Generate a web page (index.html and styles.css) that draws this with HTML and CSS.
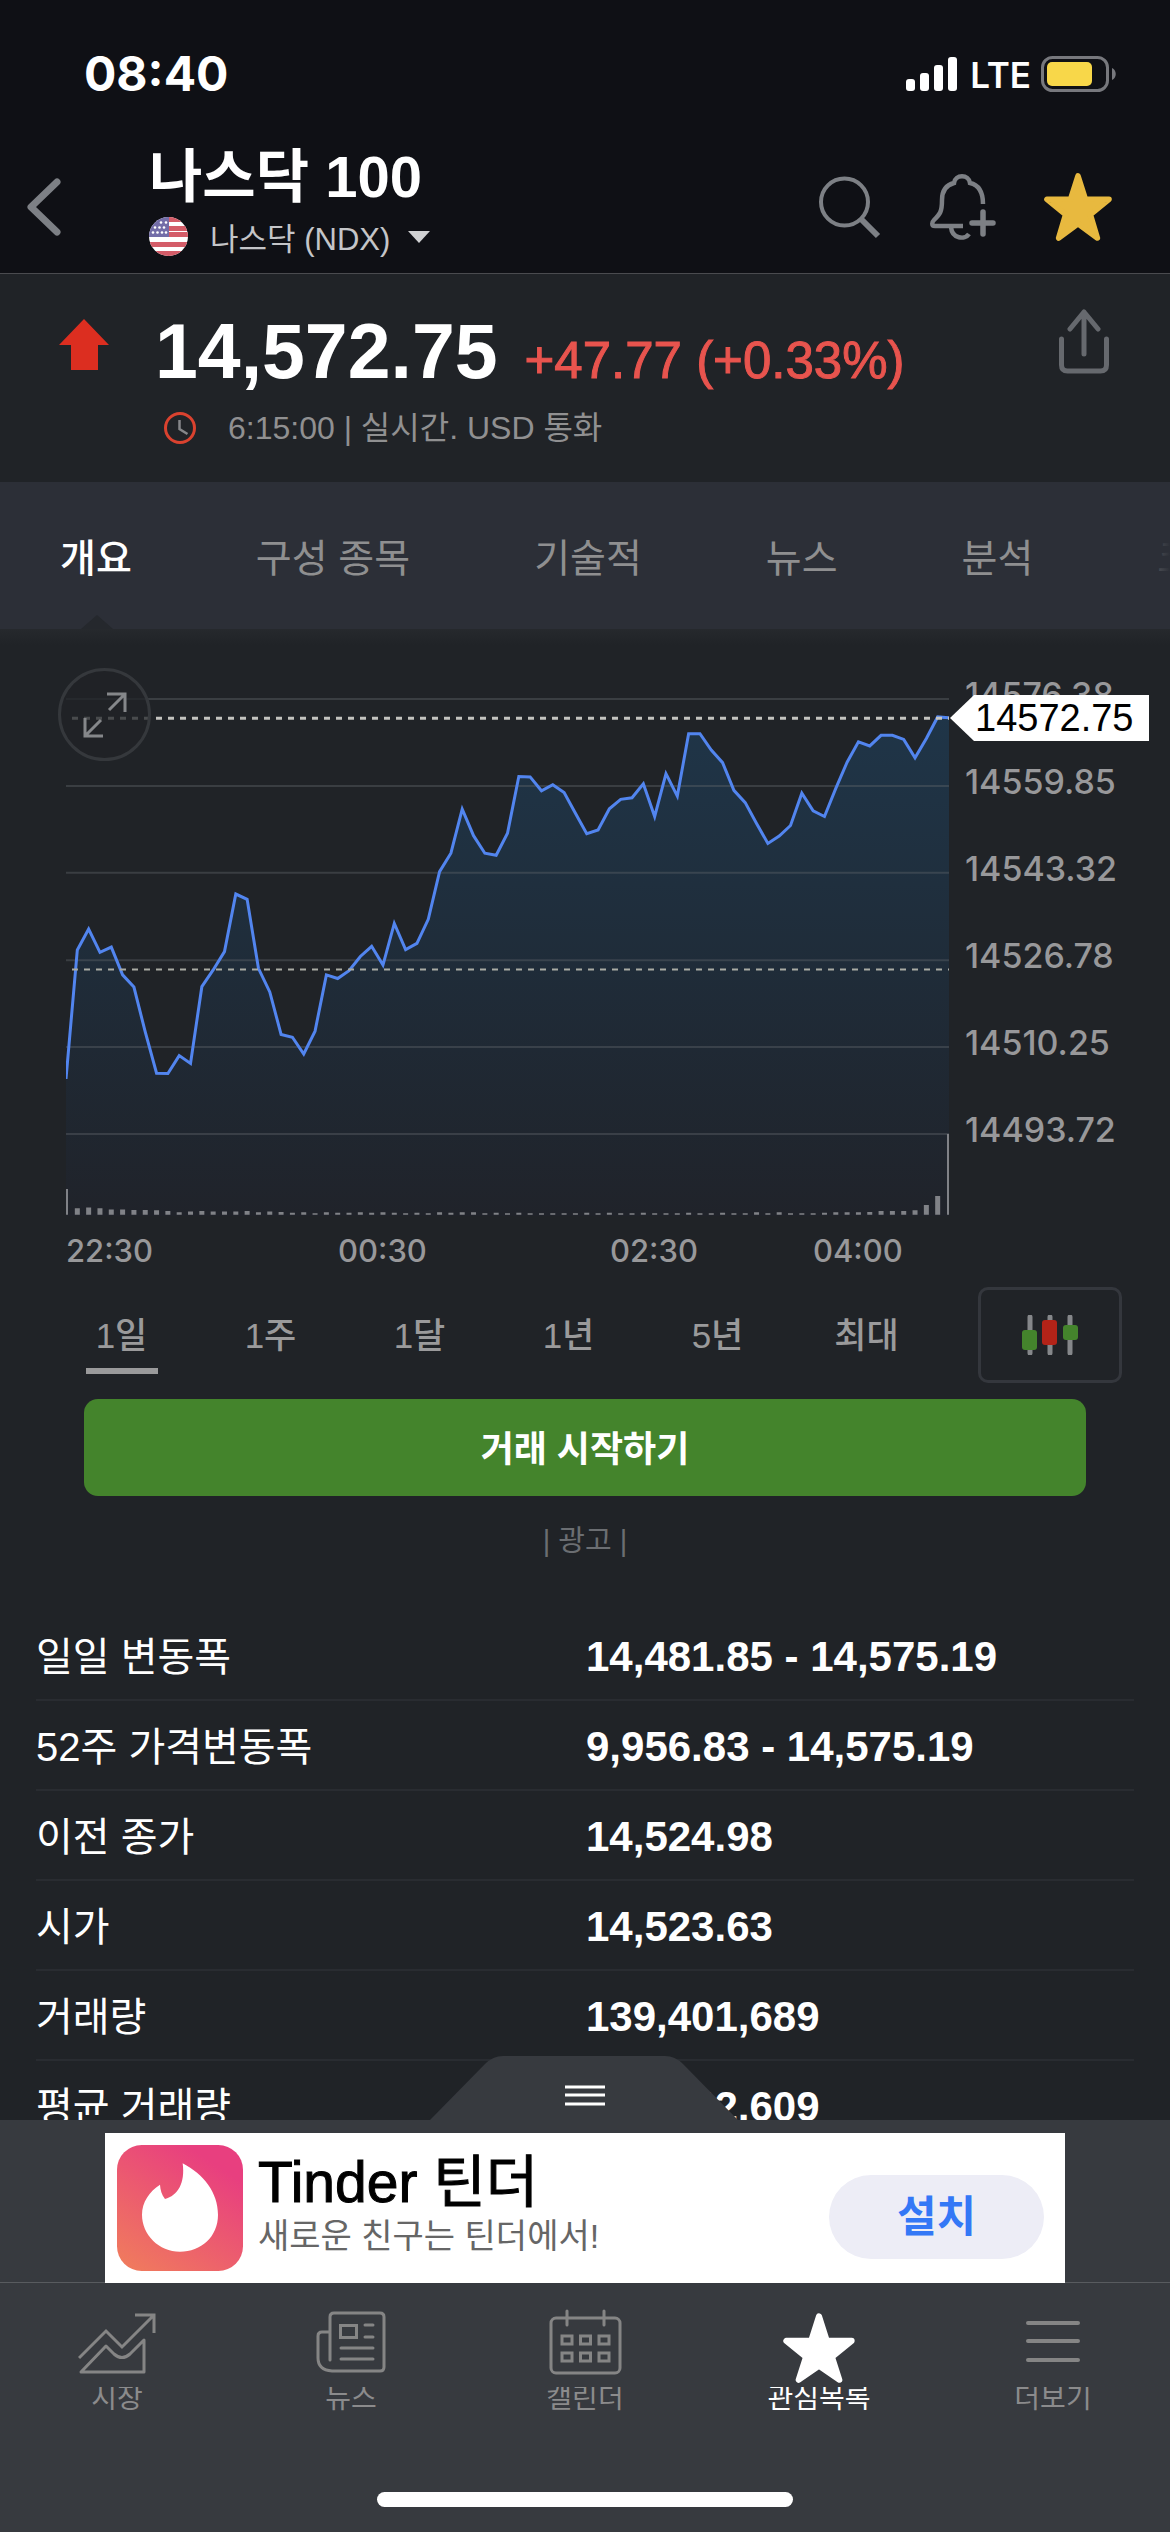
FILE: index.html
```html
<!DOCTYPE html>
<html lang="ko">
<head>
<meta charset="utf-8">
<meta name="viewport" content="width=device-width, initial-scale=1">
<title>나스닥 100</title>
<link rel="stylesheet" href="styles.css">
</head>
<body>
<div class="app">
  <div class="status">
    <span class="status-time">08:40</span>
    <div class="status-right">
      <svg class="signal" width="52" height="34" viewBox="0 0 52 34" fill="#fff"><rect x="0" y="22" width="9" height="12" rx="3"/><rect x="14" y="16" width="9" height="18" rx="3"/><rect x="28" y="8" width="9" height="26" rx="3"/><rect x="42" y="0" width="9" height="34" rx="3"/></svg>
      <span class="status-net">LTE</span>
      <svg width="75" height="37" viewBox="0 0 75 37"><rect x="1.5" y="1.5" width="65" height="33" rx="10" fill="none" stroke="#77787d" stroke-width="3"/><rect x="6" y="6" width="45" height="24" rx="5" fill="#f8d749"/><path d="M71 12c5 2 5 10 0 12z" fill="#77787d"/></svg>
    </div>
  </div>

  <header class="header">
    <button class="icon-btn back" aria-label="뒤로"><svg width="36" height="58" viewBox="0 0 36 58" fill="none" stroke="#7d8085" stroke-width="7" stroke-linecap="round" stroke-linejoin="round"><path d="M31 4L5 29l26 25"/></svg></button>
    <div class="heading">
      <h1 class="title">나스닥 100</h1>
      <button class="market">
        <svg width="39" height="39" viewBox="0 0 39 39"><defs><clipPath id="round"><circle cx="19.500" cy="19.500" r="19.500"/></clipPath></defs><g clip-path="url(#round)"><path fill="#fff" d="M0 0h39v39H0z"/><path fill="#d45c68" d="M0 25h39v5H0zM0 34h39v5H0zM20 0h19v5H20zM20 9h19v5H20zM20 15h19v5H20z"/><path fill="#736da8" d="M0 0h20v20H0z"/><g fill="#fff"><circle cx="12" cy="5.500" r="1.300"/><circle cx="17" cy="5.500" r="1.300"/><circle cx="6" cy="10.500" r="1.300"/><circle cx="10.500" cy="10.500" r="1.300"/><circle cx="15" cy="10.500" r="1.300"/><circle cx="4" cy="15.500" r="1.300"/><circle cx="8.500" cy="15.500" r="1.300"/><circle cx="13" cy="15.500" r="1.300"/><circle cx="17" cy="15.500" r="1.300"/></g></g></svg>
        <span class="market-name">나스닥 (NDX)</span>
        <svg width="22" height="12" viewBox="0 0 22 12"><path d="M0 0h22L11 12z" fill="#d0d1d3"/></svg>
      </button>
    </div>
    <div class="header-actions">
      <button class="icon-btn" aria-label="검색"><svg width="64" height="64" viewBox="0 0 64 64" fill="none" stroke="#7d8085"><circle cx="26.500" cy="27" r="23.500" stroke-width="4"/><path d="M43 44l17 17" stroke-width="6"/></svg></button>
      <button class="icon-btn" aria-label="알림 추가"><svg width="66" height="66" viewBox="0 0 66 66" fill="none" stroke="#7d8085" stroke-width="4.500"><path d="M33 52H5c-4 0-3-4-1-6 6-6 8-8 8-20 0-9 4-15 12-17 1-9 15-9 16 0 9 2 13 9 13 21"/><path d="M21 53c1 12 14 13 18 7"/><path d="M53 38v22M42 49h21" stroke-width="5.500" stroke-linecap="round"/></svg></button>
      <button class="icon-btn" aria-label="관심목록"><svg width="68" height="68" viewBox="0 0 204 204"><path fill="#e8b93f" stroke="#e8b93f" stroke-width="17" stroke-linejoin="round" d="M102 9l22 69 71 1-56 46 21 70-58-43-58 43 21-70L9 79l71-1z"/></svg></button>
    </div>
  </header>

  <section class="quote">
    <svg class="quote-arrow" width="50" height="51" viewBox="0 0 50 51"><path d="M25 0l25 26H39v25H12V26H0z" fill="#dc2e20"/></svg>
    <div class="quote-body">
      <div class="quote-line"><span class="price">14,572.75</span><span class="change">+47.77 (+0.33%)</span></div>
      <div class="quote-meta">
        <svg width="32" height="32" viewBox="0 0 32 32" fill="none"><circle cx="16" cy="16" r="14.500" stroke="#da422f" stroke-width="3"/><path d="M15.500 8v9l8 5" stroke="#85878a" stroke-width="2.500"/></svg>
        <span>6:15:00 | 실시간. USD 통화</span>
      </div>
    </div>
    <button class="icon-btn share" aria-label="공유"><svg width="50" height="65" viewBox="0 0 50 65" fill="none" stroke="#66696e" stroke-width="5" stroke-linecap="round" stroke-linejoin="round"><path d="M2.500 30v26q0 6 6 6h33q6 0 6-6V30M25 3v42M11 20L25 3l14 17"/></svg></button>
  </section>

  <nav class="tabs">
    <a class="tab tab-active" href="#">개요</a>
    <a class="tab" href="#">구성 종목</a>
    <a class="tab" href="#">기술적</a>
    <a class="tab" href="#">뉴스</a>
    <a class="tab" href="#">분석</a>
    <a class="tab" href="#">코멘트</a>
  </nav>

  <main class="content">
    <section class="chart">
      <div class="plot">
        <svg class="plot-svg" viewBox="0 122 78 1289" preserveAspectRatio="none">
          <defs><linearGradient id="area" x1="0" y1="0" x2="0" y2="1"><stop offset="0" stop-color="#1f3548"/><stop offset="0.500" stop-color="#1f2c39"/><stop offset="1" stop-color="#20232a"/></linearGradient></defs>
          <path fill="url(#area)" d="M0 1411V1075L1 759 2 708 3 765 4 752 5 820 6 850 7 960 8 1061 9 1062 10 1018 11 1037 12 849 13 808 14 763 15 622 16 635 17 804 18 862 19 966 20 973 21 1014 22 958 23 820 24 829 25 810 26 775 27 750 28 796 29 694 30 758 31 743 32 684 33 567 34 522 35 414 36 479 37 522 38 527 39 473 40 334 41 335 42 369 43 354 44 373 45 424 46 474 47 465 48 413 49 390 50 386 51 352 52 432 53 327 54 382 55 229 56 229 57 269 58 300 59 368 60 398 61 449 62 498 63 480 64 454 65 375 66 418 67 432 68 363 69 299 70 249 71 259 72 233 73 233 74 243 75 288 76 241 77 188 78 190V1411z"/>
          <path class="grid" d="M0 144H78M0 357H78M0 570H78M0 784H78M0 997H78M0 1210H78"/>
          <path class="volume" d="M1 1392V1408M2 1390V1408M3 1392V1408M4 1395V1408M5 1395V1408M6 1396V1408M7 1396V1408M8 1397V1408M9 1399V1408M10 1402V1408M11 1400V1408M12 1399V1408M13 1400V1408M14 1400V1408M15 1400V1408M16 1399V1408M17 1402V1408M18 1400V1408M19 1401V1408M20 1403V1408M21 1402V1408M22 1404V1408M23 1402V1408M24 1403V1408M25 1403V1408M26 1402V1408M27 1403V1408M28 1402V1408M29 1403V1408M30 1404V1408M31 1403V1408M32 1404V1408M33 1402V1408M34 1403V1408M35 1402V1408M36 1402V1408M37 1404V1408M38 1403V1408M39 1404V1408M40 1403V1408M41 1404V1408M42 1404V1408M43 1404V1408M44 1404V1408M45 1404V1408M46 1403V1408M47 1404V1408M48 1403V1408M49 1404V1408M50 1404V1408M51 1403V1408M52 1404V1408M53 1404V1408M54 1404V1408M55 1403V1408M56 1404V1408M57 1404V1408M58 1403V1408M59 1404V1408M60 1404V1408M61 1402V1408M62 1404V1408M63 1402V1408M64 1404V1408M65 1404V1408M66 1404V1408M67 1403V1408M68 1402V1408M69 1402V1408M70 1402V1408M71 1401V1408M72 1399V1408M73 1399V1408M74 1399V1408M75 1397V1408M76 1384V1408M77 1362V1408"/>
          <path class="volume-edge" d="M0 1345V1408M78 1210V1408"/>
          <polyline class="series" points="0,1075 1,759 2,708 3,765 4,752 5,820 6,850 7,960 8,1061 9,1062 10,1018 11,1037 12,849 13,808 14,763 15,622 16,635 17,804 18,862 19,966 20,973 21,1014 22,958 23,820 24,829 25,810 26,775 27,750 28,796 29,694 30,758 31,743 32,684 33,567 34,522 35,414 36,479 37,522 38,527 39,473 40,334 41,335 42,369 43,354 44,373 45,424 46,474 47,465 48,413 49,390 50,386 51,352 52,432 53,327 54,382 55,229 56,229 57,269 58,300 59,368 60,398 61,449 62,498 63,480 64,454 65,375 66,418 67,432 68,363 69,299 70,249 71,259 72,233 73,233 74,243 75,288 76,241 77,188 78,190"/>
          <path class="dash dash-last" d="M0 191H78"/>
          <path class="dash dash-prev" d="M0 807H78"/>
        </svg>
        <button class="expand" aria-label="확대"><svg width="46" height="46" viewBox="0 0 46 46" fill="none" stroke="#85878a" stroke-width="3"><path d="M25 2h18v18M43 2L27 18M21 44H3V26M3 44l16-16"/></svg></button>
        <div class="last-price"><svg width="24" height="46" viewBox="0 0 24 46"><path d="M0 23L24 0v46z" fill="#fff"/></svg><span class="last-price-text">14572.75</span></div>
      </div>
      <div class="y-axis"><span>14576.38</span><span>14559.85</span><span>14543.32</span><span>14526.78</span><span>14510.25</span><span>14493.72</span></div>
      <div class="x-axis"><span>22:30</span><span>00:30</span><span>02:30</span><span>04:00</span></div>
    </section>

    <div class="ranges">
      <button class="range range-active">1일</button>
      <button class="range">1주</button>
      <button class="range">1달</button>
      <button class="range">1년</button>
      <button class="range">5년</button>
      <button class="range">최대</button>
      <button class="chart-type" aria-label="차트 종류"><svg width="56" height="40" viewBox="0 0 56 40"><path d="M8 2v36M28 2v36M48 2v36" stroke="#85878a" stroke-width="5" stroke-linecap="round"/><rect y="15" width="15" height="20" rx="3" fill="#44842c"/><rect x="20" y="5" width="15" height="25" rx="3" fill="#b32318"/><rect x="41" y="10" width="15" height="15" rx="3" fill="#44842c"/></svg></button>
    </div>

    <button class="trade">거래 시작하기</button>
    <p class="ad-note">| 광고 |</p>

    <table class="stats">
      <tr><th scope="row">일일 변동폭</th><td>14,481.85 - 14,575.19</td></tr>
      <tr><th scope="row">52주 가격변동폭</th><td>9,956.83 - 14,575.19</td></tr>
      <tr><th scope="row">이전 종가</th><td>14,524.98</td></tr>
      <tr><th scope="row">시가</th><td>14,523.63</td></tr>
      <tr><th scope="row">거래량</th><td>139,401,689</td></tr>
      <tr><th scope="row">평균 거래량</th><td>228,842,609</td></tr>
    </table>
  </main>

  <footer class="bottom">
    <button class="handle" aria-label="열기"><svg width="308" height="64" viewBox="0 0 308 64"><path d="M0 64L55 8q8-8 18-8H235q10 0 18 8l55 56z" fill="#373a3f"/><path d="M135 31h40M135 39h40M135 48h40" stroke="#fff" stroke-width="3"/></svg></button>
    <div class="ad">
      <svg class="ad-logo" width="126" height="126" viewBox="0 0 378 378"><defs><linearGradient id="flame" x1="0.100" y1="1" x2="0.700" y2="0.100"><stop offset="0" stop-color="#f07b5d"/><stop offset="1" stop-color="#e83f7f"/></linearGradient></defs><rect width="378" height="378" rx="74" fill="url(#flame)"/><path fill="#fff" d="M197 55c63 33 106 88 106 154 0 66-51 111-114 111S75 269 75 209c0-37 22-70 54-90 1 15 5 30 15 43 38-10 61-46 53-107z"/></svg>
      <div class="ad-text"><strong class="ad-title">Tinder 틴더</strong><span class="ad-sub">새로운 친구는 틴더에서!</span></div>
      <button class="install">설치</button>
    </div>
    <nav class="tabbar">
      <a class="tabbar-item" href="#"><svg width="78" height="78" viewBox="0 0 78 78" fill="none" stroke="#858585" stroke-width="3"><path d="M1 53l27-27 16 16 31-31M57 10h19v18" /><path d="M3 67l25-26 8 8q8 7 16 0l14-14v32z" stroke-linejoin="round"/></svg><span class="tabbar-label">시장</span></a>
      <a class="tabbar-item" href="#"><svg width="78" height="78" viewBox="0 0 78 78" fill="none" stroke="#858585" stroke-width="3" stroke-linecap="round"><path d="M18 55V12q0-4 4-4h46q4 0 4 4v50q0 4-4 4H20Q6 65 6 53V31q0-4 4-4h8M53 20h8M53 32h8M29 43h32M29 54h32"/><path d="M28.500 20.500h16v12h-16z"/></svg><span class="tabbar-label">뉴스</span></a>
      <a class="tabbar-item" href="#"><svg width="78" height="78" viewBox="0 0 78 78" fill="none" stroke="#858585" stroke-width="3"><rect x="5" y="13" width="69" height="55" rx="5"/><path d="M21 6v14M58 6v14" stroke-linecap="round"/><path d="M16 31h10v8H16zM34.500 31h10v8h-10zM53 31h10v8H53zM16 48h10v8H16zM34.500 48h10v8h-10zM53 48h10v8H53z"/></svg><span class="tabbar-label">캘린더</span></a>
      <a class="tabbar-item tabbar-on" href="#"><svg width="78" height="78" viewBox="-9 -23 222 222"><path fill="#fff" stroke="#fff" stroke-width="17" stroke-linejoin="round" d="M102 9l22 69 71 1-56 46 21 65-58-40-58 40 21-65L9 79l71-1z"/></svg><span class="tabbar-label">관심목록</span></a>
      <a class="tabbar-item" href="#"><svg width="78" height="78" viewBox="0 0 78 78" stroke="#858585" stroke-width="4" stroke-linecap="round"><path d="M14 18h50M14 36h50M14 55h50"/></svg><span class="tabbar-label">더보기</span></a>
    </nav>
    <div class="home-bar"></div>
  </footer>
</div>
</body>
</html>
```
FILE: styles.css
```css
* { box-sizing: border-box; }

body {
  margin: 0;
  background: #202327;
  color: #fff;
  font-family: "Liberation Sans", "Noto Sans CJK KR", sans-serif;
}

button {
  padding: 0;
  border: 0;
  background: none;
  color: inherit;
  font: inherit;
}

a { color: inherit; text-decoration: none; }
svg { display: block; flex: none; }

.app {
  display: flex;
  flex-direction: column;
  height: 100vh;
  overflow: hidden;
}

/* Status bar */
.status {
  display: flex;
  flex: none;
  align-items: center;
  justify-content: space-between;
  height: 140px;
  padding: 8px 54px 0 84px;
  background: #0f1015;
  font-family: Inter, sans-serif;
}
.status-time { font-size: 48px; font-weight: 700; line-height: 56px; }
.status-right { display: flex; align-items: center; gap: 12px; }
.status-net { margin: 2px -2px 0 0; font-size: 35px; font-weight: 600; line-height: 44px; }

/* Header */
.header {
  display: flex;
  flex: none;
  align-items: center;
  height: 134px;
  padding: 0 58px 0 26px;
  background: #0f1015;
  border-bottom: 1px solid #4a4b4f;
}
.heading { flex: 1; padding: 0 0 10px 87px; }
.title { margin: 0; font-size: 58px; font-weight: 700; line-height: 64px; }
.market { display: flex; align-items: center; height: 44px; margin-top: 6px; color: #c4c5c8; font-size: 31px; }
.market-name { margin: 0 18px 0 22px; }
.header-actions { display: flex; align-items: center; gap: 48px; }

/* Quote */
.quote {
  display: flex;
  flex: none;
  align-items: flex-start;
  height: 208px;
  padding: 35px 61px 0 59px;
}
.quote-arrow { margin-top: 10px; }
.quote-body { flex: 1; padding-left: 46px; }
.quote-line { display: flex; align-items: baseline; gap: 27px; line-height: 84px; }
.price { font-size: 77px; font-weight: 700; }
.change { color: #e8544e; font-size: 51px; -webkit-text-stroke: 1px #e8544e; }
.quote-meta {
  display: flex;
  align-items: center;
  gap: 32px;
  padding: 3px 0 0 9px;
  color: #909091;
  font-size: 32px;
  line-height: 44px;
}

/* Section tabs */
.tabs {
  position: relative;
  display: flex;
  flex: none;
  gap: 124px;
  height: 147px;
  padding: 0 0 0 60px;
  overflow: hidden;
  background: #2c2f37;
  font-size: 39px;
  line-height: 154px;
  white-space: nowrap;
}
.tab { color: #8f8f90; }
.tab-active { color: #fff; font-weight: 500; }
.tabs::before {
  content: "";
  position: absolute;
  left: 81px;
  bottom: 0;
  border: solid transparent;
  border-width: 0 16px 14px;
  border-bottom-color: #25282d;
}
.tabs::after {
  content: "";
  position: absolute;
  right: 0;
  top: 0;
  bottom: 0;
  width: 40px;
  background: linear-gradient(to right, transparent, #2c2f37);
}

/* Chart */
.content {
  flex: 1;
  min-height: 0;
  overflow: hidden;
  background: linear-gradient(#26292d, #202327 16px);
}
.chart {
  display: grid;
  grid-template-columns: 1fr 221px;
  padding: 61px 0 0 66px;
}
.plot { position: relative; height: 526px; }
.plot-svg { width: 100%; height: 100%; }
.plot-svg path, .plot-svg polyline { vector-effect: non-scaling-stroke; }
.grid { stroke: #62666c; stroke-opacity: .4; stroke-width: 2; }
.series { fill: none; stroke: #5285ef; stroke-width: 3; }
.volume { stroke: #808287; stroke-width: 5; }
.volume-edge { stroke: #808287; stroke-width: 4; }
.dash { stroke-dasharray: 6 6; stroke-dashoffset: -6; }
.dash-last { stroke: #c4c4c0; stroke-width: 3; }
.dash-prev { stroke: #a9aba4; stroke-width: 2; }
.expand {
  position: absolute;
  left: -8px;
  top: -22px;
  display: grid;
  place-items: center;
  width: 93px;
  height: 93px;
  border: 3px solid #35383c;
  border-radius: 50%;
  background: rgba(32, 35, 39, .75);
}
.last-price {
  position: absolute;
  left: 100%;
  top: 5px;
  display: flex;
  margin-left: 1px;
  color: #000;
  font-size: 38px;
  line-height: 46px;
}
.last-price-text { padding: 0 15px 0 1px; background: #fff; }
.y-axis {
  display: flex;
  flex-direction: column;
  gap: 43px;
  padding: 0 0 0 16px;
  margin-top: -17px;
  color: #98989a;
  font: 500 34px/44px Inter, sans-serif;
}
.x-axis {
  grid-column: 1;
  display: grid;
  grid-template-columns: 272fr 272fr 203fr 136fr;
  padding-top: 15px;
  color: #98989a;
  font: 500 31px/40px Inter, sans-serif;
}

/* Range selector */
.ranges {
  display: flex;
  height: 96px;
  margin: 16px 48px 0 47px;
  color: #9a9a9b;
  font-size: 35px;
  font-weight: 500;
}
.range { position: relative; flex: 1; padding-bottom: 6px; }
.range-active::after {
  content: "";
  position: absolute;
  left: 50%;
  bottom: 9px;
  width: 72px;
  height: 6px;
  margin-left: -36px;
  background: #9a9a9b;
}
.chart-type {
  display: grid;
  place-items: center;
  width: 144px;
  margin-left: 37px;
  border: 3px solid #34373d;
  border-radius: 10px;
}

.trade {
  display: block;
  width: calc(100% - 168px);
  height: 97px;
  margin: 16px 84px 0;
  padding-bottom: 4px;
  border-radius: 14px;
  background: #44842c;
  font-size: 36px;
  font-weight: 700;
}
.ad-note { margin: 22px 0 46px; color: #6b6e72; font-size: 29px; line-height: 46px; text-align: center; }

/* Key figures */
.stats {
  width: calc(100% - 72px);
  margin: 0 36px;
  border-collapse: collapse;
  table-layout: fixed;
}
.stats th, .stats td {
  height: 90px;
  border-bottom: 2px solid #292c31;
  text-align: left;
}
.stats th { padding: 0 0 2px; font-size: 40px; font-weight: 400; }
.stats td { padding: 4px 0 0 1px; font-size: 42px; font-weight: 700; }

/* Bottom area */
.bottom { position: relative; flex: none; height: 412px; padding-top: 13px; background: #373a3f; }
.handle { position: absolute; left: 50%; bottom: 100%; margin-left: -155px; }
.ad {
  position: relative;
  display: flex;
  align-items: center;
  width: calc(100% - 210px);
  height: 150px;
  margin: 0 auto;
  padding: 0 21px 0 12px;
  background: #fff;
}
.ad-text { display: flex; flex: 1; flex-direction: column; padding: 0 0 8px 15px; }
.ad-title { color: #000; font-size: 57px; font-weight: 400; line-height: 64px; -webkit-text-stroke: 1px #000; }
.ad-sub { color: #666; font-size: 34px; line-height: 44px; }
.install {
  width: 215px;
  height: 84px;
  margin-top: 18px;
  padding-bottom: 8px;
  border-radius: 42px;
  background: #ededf6;
  color: #3478f6;
  font-size: 43px;
  font-weight: 700;
}
.tabbar {
  display: grid;
  grid-template-columns: repeat(5, 1fr);
  margin-top: -1px;
  padding-top: 22px;
  border-top: 1px solid #585b5f;
}
.tabbar-item { display: flex; flex-direction: column; align-items: center; color: #8b8b8c; }
.tabbar-label { height: 30px; margin-top: 4px; overflow: hidden; font-size: 28px; line-height: 24px; }
.tabbar-on { color: #fff; }
.home-bar { width: 416px; height: 15px; margin: 75px auto 0; border-radius: 8px; background: #fff; }
```
